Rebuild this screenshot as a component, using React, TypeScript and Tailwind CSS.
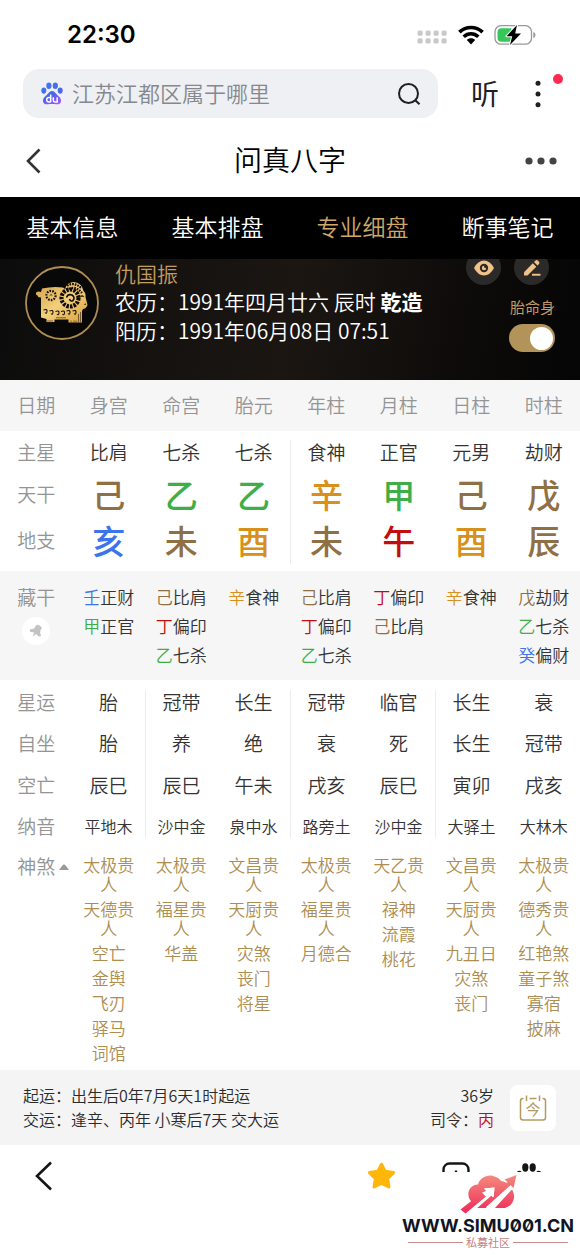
import React from "react";

type Part = { t: string; c: string };

const WOOD = "text-[#3fae49]";
const FIRE = "text-[#c10d0d]";
const EARTH = "text-[#8f7045]";
const METAL = "text-[#d8901c]";
const WATER = "text-[#3b74ec]";

const tabs = ["基本信息", "基本排盘", "专业细盘", "断事笔记"];
const columns = ["身宫", "命宫", "胎元", "年柱", "月柱", "日柱", "时柱"];
const mainStars = ["比肩", "七杀", "七杀", "食神", "正官", "元男", "劫财"];

const stems: Part[] = [
  { t: "己", c: EARTH },
  { t: "乙", c: WOOD },
  { t: "乙", c: WOOD },
  { t: "辛", c: METAL },
  { t: "甲", c: WOOD },
  { t: "己", c: EARTH },
  { t: "戊", c: EARTH },
];

const branches: Part[] = [
  { t: "亥", c: WATER },
  { t: "未", c: EARTH },
  { t: "酉", c: METAL },
  { t: "未", c: EARTH },
  { t: "午", c: FIRE },
  { t: "酉", c: METAL },
  { t: "辰", c: EARTH },
];

const hidden: [string, string, string][][] = [
  [["壬", "正财", WATER], ["甲", "正官", WOOD]],
  [["己", "比肩", EARTH], ["丁", "偏印", FIRE], ["乙", "七杀", WOOD]],
  [["辛", "食神", METAL]],
  [["己", "比肩", EARTH], ["丁", "偏印", FIRE], ["乙", "七杀", WOOD]],
  [["丁", "偏印", FIRE], ["己", "比肩", EARTH]],
  [["辛", "食神", METAL]],
  [["戊", "劫财", EARTH], ["乙", "七杀", WOOD], ["癸", "偏财", WATER]],
];

const luck = ["胎", "冠带", "长生", "冠带", "临官", "长生", "衰"];
const seat = ["胎", "养", "绝", "衰", "死", "长生", "冠带"];
const empty = ["辰巳", "辰巳", "午未", "戌亥", "辰巳", "寅卯", "戌亥"];
const sound = ["平地木", "沙中金", "泉中水", "路旁土", "沙中金", "大驿土", "大林木"];

const gods = [
  ["太极贵人", "天德贵人", "空亡", "金舆", "飞刃", "驿马", "词馆"],
  ["太极贵人", "福星贵人", "华盖"],
  ["文昌贵人", "天厨贵人", "灾煞", "丧门", "将星"],
  ["太极贵人", "福星贵人", "月德合"],
  ["天乙贵人", "禄神", "流霞", "桃花"],
  ["文昌贵人", "天厨贵人", "九丑日", "灾煞", "丧门"],
  ["太极贵人", "德秀贵人", "红艳煞", "童子煞", "寡宿", "披麻"],
];

const labelCls = "text-[19px] leading-6 font-[350] text-[#949494]";
const upperLine = (i: number) => (i === 2 ? "border-r border-[#ececec]" : "");
const lowerLine = (i: number) =>
  i === 0 || i === 2 || i === 4 ? "border-r border-[#ececec]" : "";

function SpacerRow({ size }: { size: string }) {
  return (
    <tr aria-hidden="true">
      <td colSpan={8} className={size} />
    </tr>
  );
}

function StatusBar() {
  return (
    <div className="flex h-[69px] items-center justify-between pr-11 pl-[67px]">
      <span className="font-['Inter'] text-2xl leading-7 font-semibold text-black">22:30</span>
      <div className="flex items-center gap-[10px]">
        <svg width="31" height="14" viewBox="0 0 31 14" fill="#c9c9c9" className="mt-1">
          {[0, 8, 16, 24].map((x) => (
            <g key={x}>
              <rect x={x + 0.5} y="0.5" width="5.2" height="5.2" rx="1.6" />
              <rect x={x + 0.5} y="8.3" width="5.2" height="5.2" rx="1.6" />
            </g>
          ))}
        </svg>
        <svg width="26" height="20" viewBox="0 0 26 20">
          <path d="M1.4 7.2C8 .9 18 .9 24.600 7.2" fill="none" stroke="#000" strokeWidth="3.700" />
          <path d="M5.700 11.700C10 7.700 16 7.700 20.300 11.700" fill="none" stroke="#000" strokeWidth="3.600" />
          <path d="M8.800 15.100C11 12.700 15 12.700 17.200 15.100L13 19.400Z" fill="#000" />
        </svg>
        <svg width="42" height="22" viewBox="0 0 42 22">
          <rect x="1" y="1.700" width="36.500" height="18.500" rx="6" fill="none" stroke="#999" strokeWidth="1.300" />
          <path d="M39.300 8q2.200.6 2.200 3t-2.200 3z" fill="#999" />
          <path d="M7.500 4.200H17V17.700H7.500Q3.500 17.700 3.500 13.700V8.200Q3.500 4.200 7.500 4.200Z" fill="#35c759" />
          <path d="M23 1L12.500 12.200H18.200L16 21L27 9.600H21.200Z" fill="#000" stroke="#fff" strokeWidth="2" paintOrder="stroke" strokeLinejoin="round" />
        </svg>
      </div>
    </div>
  );
}

function BaiduPaw() {
  return (
    <svg width="22" height="23" viewBox="0 0 22 23">
      <defs>
        <linearGradient id="paw" gradientUnits="userSpaceOnUse" x1="4" y1="0" x2="14" y2="23">
          <stop offset="0" stopColor="#3f7bf0" />
          <stop offset=".6" stopColor="#4a63ee" />
          <stop offset="1" stopColor="#a855f7" />
        </linearGradient>
      </defs>
      <g fill="url(#paw)">
        <ellipse cx="2.800" cy="8.600" rx="2.500" ry="3.100" />
        <ellipse cx="7.900" cy="3.700" rx="2.600" ry="3.300" />
        <ellipse cx="14.300" cy="3.700" rx="2.600" ry="3.300" />
        <ellipse cx="19.200" cy="8.600" rx="2.500" ry="3.100" />
        <path d="M11 9C8.600 9 8 11 5.500 13.200C3 15 1.800 17 2 19.200C2.400 22 4.700 22.500 7 22.200C9.500 21.900 12.500 21.900 15 22.200C17.500 22.500 19.700 22 20 19.200C20.200 17 19 15 16.500 13.200C14 11 13.400 9 11 9Z" />
      </g>
      <path d="M9.700 12.600V20M9.700 15.500H8Q5.700 15.500 5.700 17.700T8 19.900H9.700M12.300 15.200V18.200Q12.300 19.900 14 19.900H16.200V15.200" fill="none" stroke="#fff" strokeWidth="1.500" />
    </svg>
  );
}

function SearchRow() {
  return (
    <div className="flex h-[49px] items-center pr-[15px] pl-[23px]">
      <label className="flex h-full flex-1 items-center gap-[9px] rounded-2xl bg-[#eff0f3] pr-[17px] pl-[18px]">
        <BaiduPaw />
        <input
          type="text"
          aria-label="搜索"
          placeholder="江苏江都区属于哪里"
          className="min-w-0 flex-1 bg-transparent pb-1 text-[22px] leading-8 font-[350] outline-none placeholder:text-[#85888f]"
        />
        <svg width="24" height="24" viewBox="0 0 24 24" fill="none" stroke="#1f1f1f" strokeWidth="2">
          <circle cx="11.500" cy="11.500" r="9.500" />
          <path d="M18 18L22.500 22.300" />
        </svg>
      </label>
      <button type="button" className="ml-[33px] pb-0.5 text-[28px] leading-9 text-[#1f1f1f]">
        听
      </button>
      <button type="button" aria-label="更多" className="relative ml-[30px] flex h-12 w-9 items-center">
        <svg width="18" height="28" viewBox="0 0 18 28" fill="#1f1f1f">
          <circle cx="9" cy="3.300" r="2.500" />
          <circle cx="9" cy="14" r="2.500" />
          <circle cx="9" cy="24.700" r="2.500" />
        </svg>
        <span className="absolute top-1 right-0.5 size-[10px] rounded-full bg-[#fb2c4f]" />
      </button>
    </div>
  );
}

function TitleBar() {
  return (
    <header className="grid h-[79px] grid-cols-[1fr_auto_1fr] items-center px-[22px] pt-[7px]">
      <button type="button" aria-label="返回" className="justify-self-start">
        <svg width="22" height="26" viewBox="0 0 22 26" fill="none" stroke="#333" strokeWidth="2.600">
          <path d="M17.500 1.500L6 13L17.500 24.500" />
        </svg>
      </button>
      <h1 className="pb-1 text-[28px] leading-9 font-[350] text-black">问真八字</h1>
      <button type="button" aria-label="菜单" className="justify-self-end">
        <svg width="34" height="10" viewBox="0 0 34 10" fill="#444">
          <circle cx="5" cy="5" r="3.600" />
          <circle cx="17" cy="5" r="3.600" />
          <circle cx="29" cy="5" r="3.600" />
        </svg>
      </button>
    </header>
  );
}

function Goat() {
  return (
    <svg width="74" height="74" viewBox="0 0 74 74" className="shrink-0">
      <defs>
        <linearGradient id="gold" x1="0" y1="0" x2="1" y2="1">
          <stop offset="0" stopColor="#cf9f48" />
          <stop offset=".5" stopColor="#f3cf7c" />
          <stop offset="1" stopColor="#d9a13c" />
        </linearGradient>
      </defs>
      <circle cx="37" cy="37" r="36" fill="#080808" stroke="#b08d52" strokeWidth="1.800" />
      <path d="M17 22.500Q28 20 38 21.500L40 23Q42 16 49 16Q57 17 58.500 25Q61 27 60.500 31L62.500 39Q61 43 58 43L57 45V56.500H43.500V53.500H29.500V56H21.500V53L16 51.500V31.500Q13 32 12.500 29.500Q10 28.500 11.500 26Q14 25 16 26Z" fill="url(#gold)" />
      <circle cx="45" cy="32" r="8.500" fill="none" stroke="#120d07" strokeWidth="4.200" strokeDasharray="2.500 1.100" />
      <path d="M41.500 31.500Q43 27.500 47 29Q50.500 31.500 48 34.500Q45.500 36 44.500 33" fill="none" stroke="#120d07" strokeWidth="1.600" />
      <path d="M42 19.800Q49 15.500 56 22M44 23Q51 19.500 57 27" fill="none" stroke="#120d07" strokeWidth="2.200" strokeDasharray="1.700 1" />
      <circle cx="26" cy="29.500" r="4.600" fill="none" stroke="#17110a" strokeWidth="2.200" strokeDasharray="1.600 1.200" />
      <path d="M24.800 29.500Q26 27.800 27.300 29.300" fill="none" stroke="#17110a" strokeWidth=".8" />
      <path d="M18.500 44q4-1.500 3.500 1.500t-2 1M24.500 45q4-1.500 3.500 1.500t-2 1M30.500 45.500q4-1.500 3.500 1.500t-2 1M36 45.500q4-1.500 3.500 1.500t-2 1M41.500 45q4-1.500 3.500 1.500t-2 1M47.500 45q4-1.500 3.500 1.500t-2 1" fill="none" stroke="#17110a" strokeWidth="1.100" />
      <path d="M23 54v2.500M25 54v2.500M27 54v2.500M46 54.500v2M49 54.500v2M51 54.500v2M53.500 48v8M55.500 46v10M31 51.800h10" stroke="#5a421b" strokeWidth=".8" />
      <path d="M55.500 30.500q2-1.500 3 .5M59.500 38.500l1.500-.5" stroke="#17110a" strokeWidth="1.200" fill="none" />
    </svg>
  );
}

function Profile() {
  return (
    <section className="flex h-[121px] items-start overflow-hidden bg-[linear-gradient(100deg,#0c0c0c_0%,#14110f_25%,#1b1612_50%,#0d0b0a_80%,#050505_100%)] pr-[25px] pl-[25px]">
      <div className="pt-[7px]">
        <Goat />
      </div>
      <div className="ml-4 flex-1 text-[21px] leading-[29px] font-[350] whitespace-nowrap text-white">
        <h2 className="leading-7 text-[#c39c60]">仇国振</h2>
        <p>
          农历：1991年四月廿六 辰时 <strong className="font-bold">乾造</strong>
        </p>
        <p>阳历：1991年06月08日 07:51</p>
      </div>
      <div className="flex w-[90px] flex-col items-end">
        <div className="-mt-[9px] mr-[6px] flex gap-[13px]">
          <button type="button" aria-label="显示" className="flex size-[35px] items-center justify-center rounded-full bg-[#2b2a29]">
            <svg width="22" height="18" viewBox="0 0 22 18">
              <path d="M1 9Q5 1.500 11 1.500T21 9Q17 16.500 11 16.500T1 9Z" fill="#f0c389" />
              <circle cx="11" cy="9" r="4.200" fill="#2b2a29" />
              <circle cx="11" cy="9" r="2.200" fill="#f0c389" />
              <circle cx="12.200" cy="7.800" r="1.200" fill="#2b2a29" />
            </svg>
          </button>
          <button type="button" aria-label="编辑" className="flex size-[35px] items-center justify-center rounded-full bg-[#2b2a29]">
            <svg width="20" height="20" viewBox="0 0 20 20" fill="#f0c389">
              <path d="M2 14.300L10.800 5.300L14.300 8.800L5.500 17.500H2Z" />
              <path d="M12 4.100L13.600 2.500Q14.700 1.500 15.800 2.500L17 3.800Q18 4.900 17 6L15.500 7.600Z" />
              <rect x="10" y="15.800" width="8.500" height="1.900" />
            </svg>
          </button>
        </div>
        <label htmlFor="palaces" className="mt-[11px] text-[15px] leading-[22px] text-[#c39c60]">
          胎命身
        </label>
        <input
          id="palaces"
          type="checkbox"
          role="switch"
          defaultChecked
          className="mt-[6px] flex h-7 w-[46px] appearance-none items-center rounded-full bg-[#b2935a] px-0.5 before:size-[23px] before:rounded-full before:bg-white checked:justify-end"
        />
      </div>
    </section>
  );
}

function Label({ children }: { children: React.ReactNode }) {
  return (
    <th scope="row" className={`px-0 pt-0 pb-0.5 align-middle ${labelCls}`}>
      {children}
    </th>
  );
}

function Chart() {
  return (
    <table className="w-full table-fixed border-collapse text-center font-[350] text-[#333]">
      <thead className="bg-[#f6f6f6]">
        <tr className="h-[51px]">
          {["日期", ...columns].map((c) => (
            <th key={c} scope="col" className={`px-0 pt-0 pb-0.5 ${labelCls}`}>
              {c}
            </th>
          ))}
        </tr>
      </thead>
      <tbody>
        <SpacerRow size="h-[9px]" />
        <tr className="h-8 align-top">
          <th scope="row" className={`p-0 ${labelCls}`}>主星</th>
          {mainStars.map((s, i) => (
            <td key={i} className={`p-0 text-[19px] leading-6 ${upperLine(i)}`}>
              {s}
            </td>
          ))}
        </tr>
        {[
          { name: "天干", data: stems },
          { name: "地支", data: branches },
        ].map((row) => (
          <tr key={row.name} className="h-[46px]">
            <Label>{row.name}</Label>
            {row.data.map((s, i) => (
              <td key={i} className={`px-0 pt-0 pb-0.5 text-[33px] leading-[40px] font-medium ${s.c} ${upperLine(i)}`}>
                {s.t}
              </td>
            ))}
          </tr>
        ))}
        <SpacerRow size="h-[7px]" />
      </tbody>
      <tbody className="bg-[#f6f6f6]">
        <tr className="align-top">
          <th scope="row" className={`px-0 pt-[14px] pb-0 ${labelCls}`}>
            藏干
            <button type="button" aria-label="固定" className="mx-auto mt-2 flex size-7 items-center justify-center rounded-full bg-white">
              <svg width="14" height="14" viewBox="0 0 14 14" fill="#c3c3c3">
                <path d="M7.500.8L10.500 1.500Q12.800 3 13 4.500L11.500 5.800L11.200 9L12 11.800Q11 13 9.500 12.200L7.300 10L3.500 12.500L5.300 8.500L1 7.800Q.2 6 1.500 5.200L5 4.500Z" />
              </svg>
            </button>
          </th>
          {hidden.map((list, i) => (
            <td key={i} className="px-0 py-[11px] text-[17px] leading-[29px]">
              {list.map(([a, b, c]) => (
                <div key={a}>
                  <span className={c}>{a}</span>
                  {b}
                </div>
              ))}
            </td>
          ))}
        </tr>
      </tbody>
      <tbody>
        <SpacerRow size="h-[10px]" />
        <tr className="h-[33px] align-top">
          <th scope="row" className={`p-0 ${labelCls}`}>星运</th>
          {luck.map((s, i) => (
            <td key={i} className={`p-0 text-[19px] leading-6 ${lowerLine(i)}`}>
              {s}
            </td>
          ))}
        </tr>
        {[
          { name: "自坐", data: seat },
          { name: "空亡", data: empty },
        ].map((row) => (
          <tr key={row.name} className="h-[42px]">
            <Label>{row.name}</Label>
            {row.data.map((s, i) => (
              <td key={i} className={`px-0 pt-0 pb-0.5 text-[19px] leading-6 ${lowerLine(i)}`}>
                {s}
              </td>
            ))}
          </tr>
        ))}
        <tr className="h-[31px] align-bottom">
          <th scope="row" className={`p-0 ${labelCls}`}>纳音</th>
          {sound.map((s, i) => (
            <td key={i} className={`p-0 text-base leading-6 ${lowerLine(i)}`}>
              {s}
            </td>
          ))}
        </tr>
        <tr className="align-top text-[#ad8d50]">
          <th scope="row" className={`px-0 pt-4 pb-0 ${labelCls}`}>
            <button type="button" className="relative">
              神煞
              <svg width="10" height="6" viewBox="0 0 10 6" fill="#999" className="absolute top-[10px] -right-[14px]">
                <path d="M0 6L4 .8Q5 0 6 .8L10 6Z" />
              </svg>
            </button>
          </th>
          {gods.map((list, i) => (
            <td key={i} className="px-2 pt-[17px] pb-2">
              <ul className="flex flex-col gap-[6px] text-[17px] leading-[19px]">
                {list.map((g) => (
                  <li key={g}>{g}</li>
                ))}
              </ul>
            </td>
          ))}
        </tr>
      </tbody>
    </table>
  );
}

function LuckSummary() {
  return (
    <section className="flex h-[75px] items-center bg-[#f4f4f4] pr-6 pl-[23px] text-base leading-6 font-[350] text-[#2b2b2b]">
      <div className="flex-1 pb-0.5">
        <p>起运：出生后0年7月6天1时起运</p>
        <p>交运：逢辛、丙年 小寒后7天 交大运</p>
      </div>
      <div className="pb-0.5 text-right">
        <p>36岁</p>
        <p>
          司令：<span className="text-[#c10d0d]">丙</span>
        </p>
      </div>
      <button type="button" className="relative ml-4 flex size-[46px] items-center justify-center rounded-lg bg-white text-[#b39a63]">
        <svg width="28" height="28" viewBox="0 0 28 28" fill="none" stroke="currentColor" strokeWidth="1.500" className="absolute">
          <path d="M4.500 4.500H4Q1.500 4.500 1.500 7V23.500Q1.500 26 4 26H24Q26.500 26 26.500 23.500V7Q26.500 4.500 24 4.500H23.500M10.500 4.500H17.500M7.500 1.500V7M20.500 1.500V7" />
        </svg>
        <span className="mt-[3px] text-[15px] leading-4 font-normal">今</span>
      </button>
    </section>
  );
}

function Watermark() {
  return (
    <div className="absolute right-0 bottom-0 flex h-[83px] w-[180px] flex-col items-center bg-white pr-1">
      <svg width="60" height="40" viewBox="0 0 60 40" className="mt-0.5 shrink-0">
        <defs>
          <linearGradient id="cloud" gradientUnits="userSpaceOnUse" x1="0" y1="0" x2="0" y2="38">
            <stop offset="0" stopColor="#f58d7f" />
            <stop offset="1" stopColor="#ed2f5a" />
          </linearGradient>
        </defs>
        <path d="M13 27C8 22 10 11 20 10.500C22 3 31 -1 38 3C40 4 42 5 43 7Q49 7 50 13C59 16 58 31 47 34H18Z" fill="url(#cloud)" />
        <path d="M17.500 35.500L33.500 21.500L35.500 24L36.500 13.500L26 14.500L28.500 17L12 30Z" fill="#fff" />
        <path d="M2.500 35.500L24 18.500L28 22.500L7.500 39.500Z" fill="url(#cloud)" />
        <path d="M24 18.500L28.500 17L26 14.500L36.500 13.500L35.500 24L33.500 21.500L28 22.500Z" fill="#fff" />
        <path d="M28 35L47 14L52 10L57 12L36 35Z" fill="#fff" />
        <path d="M42 14.500L49.500 8L46.500 5.500L58.500 1L55.500 14L52.500 11L34 31L30 30Z" fill="url(#cloud)" />
        <path d="M29 34.500L52 14" stroke="#fff" strokeWidth="3.500" />
      </svg>
      <p className="mt-[3px] font-['Inter'] text-lg leading-[18px] font-bold whitespace-nowrap text-[#101522] slashed-zero">
        WWW.SIMU001.CN
      </p>
      <div className="flex w-full items-center gap-[3px] px-2 text-[11px] leading-[14px] text-[#c47f84]">
        <span className="h-px flex-1 bg-[#c98b8e]" />
        私募社区
        <span className="h-px flex-1 bg-[#c98b8e]" />
      </div>
    </div>
  );
}

function BottomBar() {
  return (
    <footer className="relative h-[110px] bg-white">
      <nav className="flex h-[62px] items-center justify-between pr-[38px] pl-8">
        <button type="button" aria-label="后退">
          <svg width="22" height="30" viewBox="0 0 22 30" fill="none" stroke="#151515" strokeWidth="2.600">
            <path d="M19 1.500L5 15L19 28.500" />
          </svg>
        </button>
        <div className="flex items-center gap-[46px]">
          <button type="button" aria-label="收藏">
            <svg width="29" height="28" viewBox="0 0 29 28">
              <path d="M14.500 2.200L18.100 9.300L26.600 10.600L20.600 16.700L22 25L14.500 21.300L7 25L8.400 16.700L2.400 10.600L10.900 9.300Z" fill="#ffb60a" stroke="#ffb60a" strokeWidth="3" strokeLinejoin="round" />
            </svg>
          </button>
          <button type="button" aria-label="标签页">
            <svg width="28" height="28" viewBox="0 0 28 28" fill="none" stroke="#151515" strokeWidth="2.400">
              <rect x="1.500" y="1.500" width="25" height="25" rx="6" />
              <path d="M14 8.500V20" />
            </svg>
          </button>
          <button type="button" aria-label="百度">
            <svg width="26" height="28" viewBox="0 0 26 28" fill="#151515">
              <ellipse cx="9.300" cy="5.500" rx="3.100" ry="4.200" />
              <ellipse cx="16.700" cy="5.500" rx="3.100" ry="4.200" />
              <ellipse cx="3.300" cy="12.500" rx="2.900" ry="3.800" />
              <ellipse cx="22.700" cy="12.500" rx="2.900" ry="3.800" />
              <path d="M13 12C7 14 2 20 4 25Q8 29 13 26Q18 29 22 25C24 20 19 14 13 12Z" />
            </svg>
          </button>
        </div>
      </nav>
      <Watermark />
    </footer>
  );
}

export default function App() {
  return (
    <main className="min-h-screen w-full bg-white font-['Noto_Sans_CJK_SC','Noto_Sans',sans-serif]">
      <StatusBar />
      <SearchRow />
      <TitleBar />
      <nav className="grid h-[62px] grid-cols-4 items-center bg-black pb-1 text-center text-[23px] leading-8 font-[350] text-white">
        {tabs.map((t) => (
          <a key={t} href="#" aria-current={t === "专业细盘" ? "page" : undefined} className="aria-[current=page]:text-[#cfa86a]">
            {t}
          </a>
        ))}
      </nav>
      <Profile />
      <Chart />
      <LuckSummary />
      <BottomBar />
    </main>
  );
}
